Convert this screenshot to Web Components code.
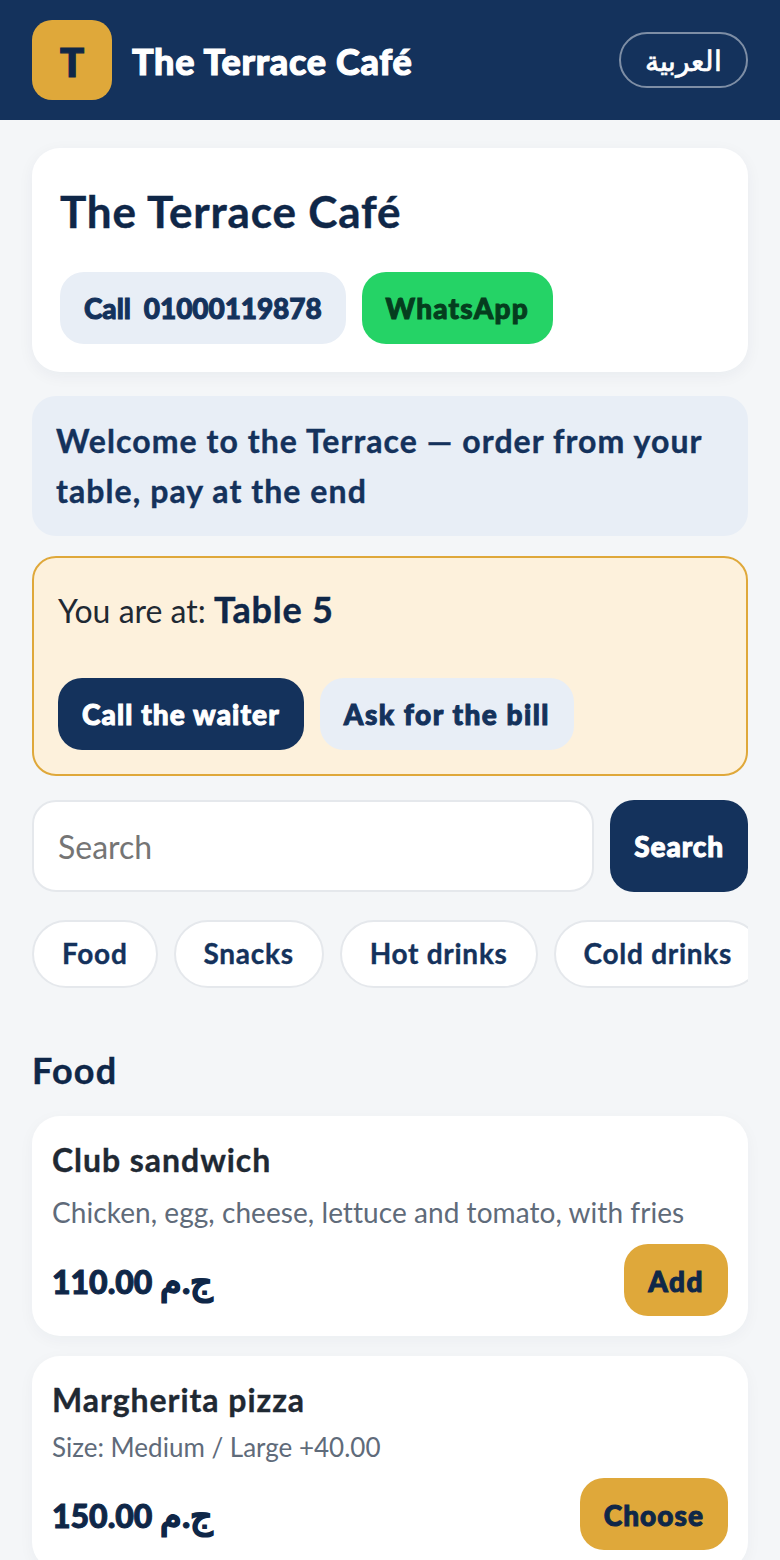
<!DOCTYPE html>
<html lang="en">
<head>
<meta charset="utf-8">
<title>The Terrace Café</title>
<style>
  html, body { margin: 0; padding: 0; background: #f4f6f8; }
  body {
    font-family: Lato, "Noto Sans", sans-serif;
    color: #1f2933;
    height: 1560px;
    overflow: hidden;
  }
  main { display: flex; flex-direction: column; padding: 28px 32px 0; }
</style>
</head>
<body>
<site-header name="The Terrace Café" initial="T" lang-label="العربية"></site-header>
<main>
  <cafe-card name="The Terrace Café">
    <ui-btn variant="soft" style="--ls:-.08px">Call&nbsp; 01000119878</ui-btn>
    <ui-btn variant="green" style="--ls:1.2px">WhatsApp</ui-btn>
  </cafe-card>
  <notice-banner>Welcome to the Terrace — order from your table, pay at the end</notice-banner>
  <table-panel table="Table 5">
    <ui-btn variant="navy">Call the waiter</ui-btn>
    <ui-btn variant="soft" style="--ls:1.5px">Ask for the bill</ui-btn>
  </table-panel>
  <search-bar></search-bar>
  <chip-row>
    <cat-chip>Food</cat-chip>
    <cat-chip>Snacks</cat-chip>
    <cat-chip>Hot drinks</cat-chip>
    <cat-chip>Cold drinks</cat-chip>
  </chip-row>
  <menu-section title="Food">
    <menu-item name="Club sandwich" desc="Chicken, egg, cheese, lettuce and tomato, with fries" price="110.00" currency="ج.م" action="Add" spacing="1.5px"></menu-item>
    <menu-item name="Margherita pizza" note="Size: Medium / Large +40.00" price="150.00" currency="ج.م" action="Choose" spacing="1.05px"></menu-item>
  </menu-section>
</main>

<script>
const NAVY = '#14325c';
const INK = '#0f2748';
const GOLD = '#dfa83a';

/* small helper so each element only has to give its html */
class ShadowEl extends HTMLElement {
  connectedCallback() {
    if (this.shadowRoot) return;
    this.attachShadow({ mode: 'open' }).innerHTML = this.markup();
  }
  attr(name) { return this.getAttribute(name) || ''; }
}

class SiteHeader extends ShadowEl {
  markup() {
    return `<style>
      :host { display: block; background: ${NAVY}; }
      .bar { height: 120px; box-sizing: border-box; padding: 0 32px; display: flex; align-items: center; justify-content: space-between; }
      .brand { display: flex; align-items: center; gap: 20px; }
      .logo { width: 80px; height: 80px; box-sizing: border-box; padding-top: 4px; border-radius: 20px; background: ${GOLD}; color: ${INK}; display: flex; align-items: center; justify-content: center; font-size: 40px; font-weight: 900; -webkit-text-stroke: 1.2px; }
      .name { color: #fff; font-size: 36px; font-weight: 900; letter-spacing: .7px; -webkit-text-stroke: 1.1px; padding-top: 2px; }
      .lang { height: 56px; box-sizing: border-box; padding: 0 24px; border: 2px solid rgba(255,255,255,.45); border-radius: 28px; color: #fff; font-size: 28px; font-weight: 400; -webkit-text-stroke: .7px; display: flex; align-items: center; }
    </style>
    <div class="bar">
      <div class="brand"><span class="logo">${this.attr('initial')}</span><span class="name">${this.attr('name')}</span></div>
      <span class="lang" dir="rtl">${this.attr('lang-label')}</span>
    </div>`;
  }
}

class UiBtn extends ShadowEl {
  markup() {
    const looks = {
      soft: '#e8eef6;--fg:#14325c',
      green: '#25d366;--fg:#053d1e',
      navy: `${NAVY};--fg:#fff`,
      gold: `${GOLD};--fg:${INK}`,
    };
    return `<style>
      :host { display: inline-flex; }
      .btn { --bg: ${looks[this.attr('variant')] || looks.soft}; height: 72px; box-sizing: border-box; padding: var(--pt, 0) 24px 0; border-radius: 24px; background: var(--bg); color: var(--fg); font-size: 28px; font-weight: 900; letter-spacing: var(--ls, 1.1px); -webkit-text-stroke: 1px; display: flex; align-items: center; white-space: nowrap; }
    </style><span class="btn"><slot></slot></span>`;
  }
}

class CafeCard extends ShadowEl {
  markup() {
    return `<style>
      :host { display: block; background: #fff; border-radius: 28px; padding: 28px; box-shadow: 0 4px 16px rgba(15,39,72,.05); }
      h1 { margin: 0 0 26px; font-size: 44px; line-height: 70px; font-weight: 700; letter-spacing: .85px; -webkit-text-stroke: .4px; color: ${INK}; }
      .row { display: flex; gap: 16px; }
    </style><h1>${this.attr('name')}</h1><div class="row"><slot></slot></div>`;
  }
}

class NoticeBanner extends ShadowEl {
  markup() {
    return `<style>
      :host { display: block; margin-top: 24px; background: #e8eef6; border-radius: 24px; padding: 20px 24px; color: ${NAVY}; font-size: 32px; line-height: 50px; font-weight: 700; letter-spacing: 1.08px; -webkit-text-stroke: .4px; }
    </style><slot></slot>`;
  }
}

class TablePanel extends ShadowEl {
  markup() {
    return `<style>
      :host { display: block; margin-top: 20px; background: #fdf1dc; border: 2px solid ${GOLD}; border-radius: 24px; padding: 24px; }
      .where { font-size: 32px; height: 56px; line-height: 54px; color: #1f2933; margin-bottom: 40px; }
      strong { font-size: 36px; font-weight: 700; letter-spacing: .8px; -webkit-text-stroke: .4px; color: ${INK}; }
      .row { display: flex; gap: 16px; }
    </style><div class="where">You are at: <strong>${this.attr('table')}</strong></div><div class="row"><slot></slot></div>`;
  }
}

class SearchBar extends ShadowEl {
  markup() {
    return `<style>
      :host { display: flex; gap: 16px; margin-top: 24px; height: 92px; }
      input { flex: 1; min-width: 0; box-sizing: border-box; height: 92px; border: 2px solid #e5e8ec; border-radius: 24px; background: #fff; padding: 0 24px; font-family: inherit; font-size: 32px; outline: none; }
      input::placeholder { color: #757575; opacity: 1; }
      button { height: 92px; border: 0; border-radius: 24px; background: ${NAVY}; color: #fff; padding: 0 24px; font-family: inherit; font-size: 28px; font-weight: 900; letter-spacing: .9px; -webkit-text-stroke: 1px; }
    </style><input placeholder="Search"><button>Search</button>`;
  }
}

class ChipRow extends ShadowEl {
  markup() {
    return `<style>
      :host { display: flex; gap: 16px; margin-top: 28px; overflow: hidden; }
    </style><slot></slot>`;
  }
}

class CatChip extends ShadowEl {
  markup() {
    return `<style>
      :host { display: flex; flex: none; align-items: center; height: 68px; box-sizing: border-box; padding: 0 28px 2px; background: #fff; border: 2px solid #e5e8ec; border-radius: 34px; color: ${NAVY}; font-size: 28px; font-weight: 700; letter-spacing: .72px; -webkit-text-stroke: .35px; white-space: nowrap; }
    </style><slot></slot>`;
  }
}

class MenuSection extends ShadowEl {
  markup() {
    return `<style>
      :host { display: block; margin-top: 56px; }
      h2 { margin: 0 0 20px; font-size: 36px; line-height: 52px; font-weight: 700; letter-spacing: 1.2px; -webkit-text-stroke: .4px; color: ${INK}; }
      .list { display: flex; flex-direction: column; gap: 20px; }
    </style><h2>${this.attr('title')}</h2><div class="list"><slot></slot></div>`;
  }
}

class MenuItem extends ShadowEl {
  markup() {
    const line = this.hasAttribute('desc')
      ? `<p class="desc">${this.attr('desc')}</p>`
      : `<p class="note">${this.attr('note')}</p>`;
    return `<style>
      :host { display: block; background: #fff; border-radius: 28px; padding: 20px; box-shadow: 0 4px 16px rgba(15,39,72,.04); }
      h3 { margin: 0; font-size: 32px; line-height: 48px; padding-bottom: 2px; font-weight: 700; letter-spacing: .95px; -webkit-text-stroke: .35px; color: #1f2933; }
      p { margin: 0; color: #5f6b7a; }
      .desc { font-size: 28px; line-height: 52px; margin-bottom: 6px; letter-spacing: .06px; }
      .note { font-size: 26px; line-height: 42px; margin-bottom: 10px; }
      .foot { display: flex; align-items: center; justify-content: space-between; }
      .price { font-size: 32px; font-weight: 900; letter-spacing: -.9px; -webkit-text-stroke: 1px; color: ${INK}; }
      .cur { font-size: 35px; letter-spacing: 0; }
      ui-btn { --ls: ${this.attr('spacing')}; --pt: 2px; }
    </style>
    <h3>${this.attr('name')}</h3>
    ${line}
    <div class="foot"><span class="price">${this.attr('price')} <span class="cur">${this.attr('currency')}</span></span><ui-btn variant="gold">${this.attr('action')}</ui-btn></div>`;
  }
}

customElements.define('site-header', SiteHeader);
customElements.define('ui-btn', UiBtn);
customElements.define('cafe-card', CafeCard);
customElements.define('notice-banner', NoticeBanner);
customElements.define('table-panel', TablePanel);
customElements.define('search-bar', SearchBar);
customElements.define('chip-row', ChipRow);
customElements.define('cat-chip', CatChip);
customElements.define('menu-section', MenuSection);
customElements.define('menu-item', MenuItem);
</script>
</body>
</html>
